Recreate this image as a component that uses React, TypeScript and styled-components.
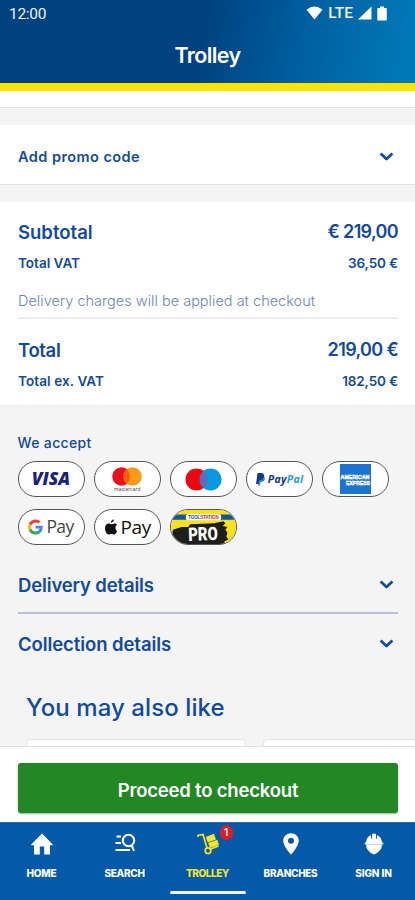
import React from "react";
import styled, { createGlobalStyle } from "styled-components";

const GlobalStyle = createGlobalStyle`
  * { box-sizing: border-box; }
  body { margin: 0; background: #f4f4f4; font-family: Inter, "Open Sans", sans-serif; color: #124a9e; }
  button { font: inherit; border: 0; background: none; color: inherit; padding: 0; }
`;

const Screen = styled.div`
  width: 415px;
  height: 900px;
  overflow: hidden;
  display: flex;
  flex-direction: column;
  background: #f4f4f4;
`;

const Header = styled.header`
  height: 91px;
  flex: none;
  color: #fff;
  border-bottom: 8px solid #fde300;
  background: linear-gradient(100deg, #00417f 0%, #00417f 48%, #0060a0 73%, #0078b8 97%);
`;

const StatusBar = styled.div`
  height: 28px;
  padding: 0 28px 0 9px;
  display: flex;
  align-items: center;
  justify-content: space-between;
  font-family: Roboto, sans-serif;
  color: #f0f2fb;
`;

const StatusIcons = styled.div`
  display: flex;
  align-items: center;
  gap: 5px;
  margin-top: -2px;
`;

const TitleBar = styled.div`
  height: 55px;
  display: flex;
  justify-content: center;
`;

const Text = styled.span<{ $size: number; $weight?: number; $track?: number; $line?: number; $color?: string }>`
  display: block;
  white-space: nowrap;
  font-size: ${(p) => p.$size}px;
  font-weight: ${(p) => p.$weight ?? 600};
  letter-spacing: ${(p) => p.$track ?? 0}px;
  line-height: ${(p) => p.$line ?? 24}px;
  color: ${(p) => p.$color ?? "inherit"};
`;

const Content = styled.main`
  flex: 1;
  min-height: 0;
  overflow: hidden;
`;

const PreviousCard = styled.div`
  height: 17px;
  background: #fff;
  border-bottom: 1px solid #e3e3e3;
`;

const PromoRow = styled.button`
  display: flex;
  width: 100%;
  height: 60px;
  margin: 17px 0;
  padding: 4px 21px 0 18px;
  align-items: center;
  justify-content: space-between;
  background: #fff;
  border-bottom: 1px solid #dedede;
`;

const Summary = styled.section`
  height: 204px;
  padding: 18px 17px 0 18px;
  background: #fff;
  border-bottom: 1px solid #ececec;
`;

const SummaryRow = styled.div<{ $height: number }>`
  display: flex;
  justify-content: space-between;
  height: ${(p) => p.$height}px;
`;

const DeliveryNote = styled.div`
  height: 30px;
  margin-bottom: 19px;
  border-bottom: 2px solid #ededed;
`;

const Payments = styled.section`
  padding: 25px 17px 0 17.5px;
`;

const PillGrid = styled.div`
  display: grid;
  grid-template-columns: repeat(5, 67px);
  gap: 12px 9.2px;
  margin-top: 6px;
`;

const Pill = styled.div`
  height: 36px;
  display: flex;
  align-items: center;
  justify-content: center;
  gap: 3px;
  overflow: hidden;
  border: 1px solid #555;
  border-radius: 18px;
  background: #fff;
  color: #222;
`;

const Wordmark = styled.span<{ $size: number; $weight?: number; $color?: string; $track?: number; $italic?: boolean }>`
  font-family: "Open Sans", sans-serif;
  font-size: ${(p) => p.$size}px;
  line-height: 1;
  font-weight: ${(p) => p.$weight ?? 400};
  font-style: ${(p) => (p.$italic ? "italic" : "normal")};
  letter-spacing: ${(p) => p.$track ?? 0}px;
  color: ${(p) => p.$color ?? "#333"};
`;

const MastercardMark = styled.div`
  display: flex;
  flex-direction: column;
  align-items: center;
  gap: 1px;
`;

const DetailRow = styled.button`
  display: flex;
  width: 380px;
  height: 60px;
  margin-left: 18px;
  padding: 0 4px 0 0;
  align-items: center;
  justify-content: space-between;
`;

const Details = styled.section`
  margin-top: 9px;
  ${DetailRow}:first-child {
    padding-top: 3px;
    border-bottom: 2px solid #b7bfdb;
  }
`;

const Suggestions = styled.section`
  padding: 17px 0 0 26px;
`;

const Cards = styled.div`
  display: flex;
  gap: 17px;
  margin-top: 14px;
`;

const Card = styled.div`
  flex: none;
  width: 220px;
  height: 200px;
  background: #fff;
  border: 1px solid #e3e3e3;
  border-radius: 4px;
`;

const CheckoutBar = styled.div`
  flex: none;
  height: 76px;
  padding: 16px 17px 0 18px;
  background: #fff;
  border-top: 1px solid #e2e2e2;
`;

const CheckoutButton = styled.button`
  display: flex;
  align-items: center;
  justify-content: center;
  width: 100%;
  height: 50px;
  padding-top: 3px;
  color: #fff;
  background: #228823;
  border-radius: 3px;
  box-shadow: 0 1px 2px rgba(0, 0, 0, 0.35);
`;

const Nav = styled.nav`
  flex: none;
  height: 78px;
  background: #0459a9;
  border-top: 1px solid #2a6aa8;
`;

const NavItems = styled.div`
  display: grid;
  grid-template-columns: repeat(5, 83px);
  height: 68px;
`;

const NavItem = styled.button<{ $active?: boolean }>`
  display: flex;
  flex-direction: column;
  align-items: center;
  padding-top: 9px;
  gap: 10px;
  color: ${(p) => (p.$active ? "#f5e52a" : "#fff")};
`;

const IconSlot = styled.span`
  position: relative;
  display: flex;
  width: 24px;
  height: 24px;
`;

const Badge = styled.span`
  position: absolute;
  left: 24px;
  top: -7px;
  width: 13px;
  height: 15px;
  border-radius: 7px;
  background: #e01b22;
  color: #fff;
  font-size: 10px;
  line-height: 15px;
  font-weight: 600;
  text-align: center;
`;

const GestureBar = styled.div`
  width: 76px;
  height: 3px;
  margin: 0 auto;
  border-radius: 2px;
  background: #edf3fa;
`;

const Chevron = () => (
  <svg width="15" height="10" viewBox="0 0 15 10" fill="none" stroke="#124a9e" strokeWidth="2.7">
    <path d="M1.600 1.500 7.500 7 13.400 1.500" strokeLinejoin="round" />
  </svg>
);

const GoogleG = () => (
  <svg width="15" height="16" viewBox="0 0 48 48">
    <path fill="#EA4335" d="M24 9.500c3.500 0 6.700 1.200 9.200 3.600l6.900-6.900C35.900 2.400 30.500 0 24 0 14.600 0 6.500 5.400 2.600 13.200l8 6.200C12.400 13.700 17.700 9.500 24 9.500z" />
    <path fill="#4285F4" d="M47 24.600c0-1.600-.2-3.100-.4-4.600H24v9h12.900c-.6 3-2.300 5.500-4.800 7.200l7.700 6C44.400 38 47 31.800 47 24.600z" />
    <path fill="#FBBC05" d="M10.500 28.600c-.5-1.500-.8-3-.8-4.600s.3-3.100.8-4.600l-8-6.200C.9 16.500 0 20.100 0 24s.9 7.500 2.600 10.800l7.900-6.200z" />
    <path fill="#34A853" d="M24 48c6.500 0 11.900-2.100 15.900-5.800l-7.700-6c-2.200 1.500-4.900 2.300-8.200 2.300-6.300 0-11.600-4.200-13.500-9.900l-7.900 6.200C6.500 42.600 14.600 48 24 48z" />
  </svg>
);

const AppleMark = () => (
  <svg width="14" height="17" viewBox="0 0 14 17" fill="#111">
    <path d="M9.800.6c.1 1.700-1.300 3.200-2.900 3.100C6.800 2.100 8.200.8 9.800.6zM13 12.200c-.7 1.700-1.700 3.400-3 3.400-1 0-1.400-.6-2.600-.6s-1.600.6-2.600.6C2.700 15.600 1 12.200 1 9.300c0-2.900 1.700-4.800 3.600-4.800 1.200 0 2 .7 2.900.7.800 0 1.700-.8 3.100-.8.900 0 1.900.5 2.500 1.400-2.300 1.300-2 5 0 6.400z" />
  </svg>
);

const ToolstationPro = () => (
  <svg width="68" height="36" viewBox="0 0 68 36">
    <rect width="68" height="36" fill="#fae11d" />
    <path d="M0 5H68V10.500H0Z" fill="#15559d" />
    <path d="M2 21 11 18 18 18 20 15 45 14 55 12 57 14 54 17 59 18 57 21 59 24 58 28 60 31 56 33 56 36H0Z" fill="#1d1f1c" />
    <rect x="15.500" y="4.500" width="37" height="6.500" rx="3" fill="#fff" />
    <text x="18" y="9.500" fontFamily="Liberation Sans, sans-serif" fontSize="4.800" fontWeight="700" textLength="32">
      <tspan fill="#15559d">TOOL</tspan>
      <tspan fill="#dc2633">STATION</tspan>
    </text>
    <text x="18" y="32" fill="#fff" fontFamily="Roboto, sans-serif" fontSize="19.500" fontWeight="900" textLength="31" lengthAdjust="spacingAndGlyphs" transform="rotate(-2 34 25)">PRO</text>
  </svg>
);

const AmexMark = () => (
  <svg width="31" height="32" viewBox="0 0 31 32">
    <rect y="1" width="31" height="30" fill="#1c74d0" />
    <g fill="#1c74d0" stroke="#fff" strokeWidth=".6" fontFamily="Liberation Sans, sans-serif" fontSize="5.600" fontWeight="700">
      <text x=".5" y="15.500" textLength="29" lengthAdjust="spacingAndGlyphs">AMERICAN</text>
      <text x="6" y="21.500" textLength="24" lengthAdjust="spacingAndGlyphs">EXPRESS</text>
    </g>
  </svg>
);

const HomeIcon = () => (
  <svg width="24" height="24" viewBox="0 0 24 24" fill="currentColor">
    <path d="M12 1.500 22.800 12.500V13.300H20V22.500H14.200V14.500H9.800V22.500H4V13.300H1.200V12.500Z" />
  </svg>
);

const SearchIcon = () => (
  <svg width="24" height="24" viewBox="0 0 24 24" fill="none" stroke="currentColor" strokeWidth="2.100">
    <path d="M3.500 4.500H8M2.500 11H8M2.500 18H17" />
    <circle cx="15.500" cy="8.500" r="5.700" />
    <path d="M18.300 12.500 21 18.800" />
  </svg>
);

const TrolleyIcon = () => (
  <svg width="24" height="24" viewBox="0 0 24 24" fill="none" stroke="currentColor" strokeWidth="1.700">
    <path d="M2 5V3.500L7 2.500 11 16M13.500 17.500 22.500 14" />
    <circle cx="12" cy="18.700" r="2.800" />
    <path d="M9.800 5 17.800 1.800 20 7.400 11.700 10.400Z M12.200 11 21.300 7.800 23 12.900 13.900 16Z" fill="currentColor" stroke="none" />
  </svg>
);

const PinIcon = () => (
  <svg width="24" height="24" viewBox="0 0 24 24" fill="currentColor">
    <path fillRule="evenodd" d="M12 1.300C7.700 1.300 4.200 4.500 4.200 8.700 4.200 14 12 22.600 12 22.600S19.800 14 19.800 8.700C19.800 4.500 16.300 1.300 12 1.300ZM12 5.700A3 3 0 1 1 12 11.700 3 3 0 0 1 12 5.700Z" />
  </svg>
);

const HelmetIcon = () => (
  <svg width="24" height="24" viewBox="0 0 24 24" fill="currentColor">
    <path d="M10 2Q12 1 14 2V6.500H15V3Q19.500 5 19.900 10L21.300 11V12.400H2.700V11L4.100 10Q4.500 5 9 3V6.500H10ZM4 12.700H20Q20 19 12 22.600 4 19 4 12.700Z" />
  </svg>
);

const navigation = [
  { label: "HOME", Icon: HomeIcon, track: -0.2 },
  { label: "SEARCH", Icon: SearchIcon, track: -0.3 },
  { label: "TROLLEY", Icon: TrolleyIcon, track: -0.45, count: 1 },
  { label: "BRANCHES", Icon: PinIcon, track: -0.3 },
  { label: "SIGN IN", Icon: HelmetIcon, track: -0.1 },
];

export default function App() {
  return (
    <>
      <GlobalStyle />
      <Screen>
        <Header>
          <StatusBar>
            <Text $size={15.5} $weight={400} $track={-0.3}>12:00</Text>
            <StatusIcons>
              <svg width="17" height="14" viewBox="0 0 17 14" fill="#fff"><path d="M.5 3.700Q8.500-2.500 16.500 3.700L8.500 13.500Z" /></svg>
              <Text $size={15.5} $weight={500}>LTE</Text>
              <svg width="14" height="14" viewBox="0 0 14 14" fill="#fff"><path d="M0 13.500 13.500.5V13.500Z" /></svg>
              <svg width="10" height="15" viewBox="0 0 10 15" fill="#fff"><path d="M3 .5H7V2H9Q9.800 2 9.800 3V13.500Q9.800 14.500 9 14.500H1Q.3 14.500.3 13.500V3Q.3 2 1 2H3Z" /></svg>
            </StatusIcons>
          </StatusBar>
          <TitleBar><Text $size={21.5} $line={54} $track={-0.6}>Trolley</Text></TitleBar>
        </Header>
        <Content>
          <PreviousCard />
          <PromoRow>
            <Text $size={14.5} $track={0.45}>Add promo code</Text>
            <Chevron />
          </PromoRow>
          <Summary>
            <SummaryRow $height={31}>
              <Text $size={18.5}>Subtotal</Text>
              <Text $size={18} $track={-0.65}>€ 219,00</Text>
            </SummaryRow>
            <SummaryRow $height={38}>
              <Text $size={13.5}>Total VAT</Text>
              <Text $size={13.5} $track={-0.15}>36,50 €</Text>
            </SummaryRow>
            <DeliveryNote>
              <Text $size={14.5} $weight={300} $track={0.01} $color="#6f83c0">Delivery charges will be applied at checkout</Text>
            </DeliveryNote>
            <SummaryRow $height={31}>
              <Text $size={18.5} $track={-0.35}>Total</Text>
              <Text $size={18} $track={-0.65}>219,00 €</Text>
            </SummaryRow>
            <SummaryRow $height={30}>
              <Text $size={13.5} $track={0.1}>Total ex. VAT</Text>
              <Text $size={13.5} $track={-0.15}>182,50 €</Text>
            </SummaryRow>
          </Summary>
          <Payments>
            <Text $size={14} $weight={500} $track={0.35}>We accept</Text>
            <PillGrid>
              <Pill><Wordmark $size={17.5} $weight={800} $italic $color="#17227c">VISA</Wordmark></Pill>
              <Pill>
                <MastercardMark>
                  <svg width="30" height="19" viewBox="0 0 30 19"><circle cx="9.500" cy="9.500" r="9.300" fill="#eb101b" /><circle cx="20.500" cy="9.500" r="9.300" fill="#f69a1b" /><path d="M15 2Q21 9.500 15 17Q9 9.500 15 2Z" fill="#ff5d05" /></svg>
                  <Wordmark $size={4.8} $weight={500} $track={0.1}>mastercard</Wordmark>
                </MastercardMark>
              </Pill>
              <Pill>
                <svg width="37" height="23" viewBox="0 0 37 23"><circle cx="11.500" cy="11.500" r="11" fill="#eb080f" /><circle cx="25.500" cy="11.500" r="11" fill="#0798df" /><path d="M18.500 3Q25.500 11.500 18.500 20Q11.500 11.500 18.500 3Z" fill="#7065b6" /></svg>
              </Pill>
              <Pill>
                <svg width="9" height="13" viewBox="0 0 9 13"><path d="M1.500 0H6Q9 1 8 4.500 7 8 3.500 8L2.800 11H0Z" fill="#143b88" /><path d="M8.500 3.500Q10 9 4.500 9L4 12.500H2L3 7.500Q7.500 8 8.500 3.500Z" fill="#178cd3" /></svg>
                <Wordmark $size={10.5} $weight={700} $italic $track={0.3} $color="#173282">Pay<Wordmark as="b" $size={10.5} $weight={700} $italic $track={0.3} $color="#2a9bdb">Pal</Wordmark></Wordmark>
              </Pill>
              <Pill><AmexMark /></Pill>
              <Pill><GoogleG /><Wordmark $size={17.5} $track={-0.6} $color="#454545">Pay</Wordmark></Pill>
              <Pill><AppleMark /><Wordmark $size={19} $track={-0.4} $color="#111">Pay</Wordmark></Pill>
              <Pill><ToolstationPro /></Pill>
            </PillGrid>
          </Payments>
          <Details>
            <DetailRow><Text $size={18.5} $track={-0.15}>Delivery details</Text><Chevron /></DetailRow>
            <DetailRow><Text $size={18.5} $track={-0.08}>Collection details</Text><Chevron /></DetailRow>
          </Details>
          <Suggestions>
            <Text $size={24} $weight={500} $line={34} $track={0.08}>You may also like</Text>
            <Cards><Card /><Card /></Cards>
          </Suggestions>
        </Content>
        <CheckoutBar>
          <CheckoutButton><Text $size={18.5} $track={-0.2}>Proceed to checkout</Text></CheckoutButton>
        </CheckoutBar>
        <Nav>
          <NavItems>
            {navigation.map(({ label, Icon, track, count }) => (
              <NavItem key={label} $active={!!count}>
                <IconSlot><Icon />{count && <Badge>{count}</Badge>}</IconSlot>
                <Text $size={10} $weight={800} $track={track} $line={14}>{label}</Text>
              </NavItem>
            ))}
          </NavItems>
          <GestureBar />
        </Nav>
      </Screen>
    </>
  );
}
